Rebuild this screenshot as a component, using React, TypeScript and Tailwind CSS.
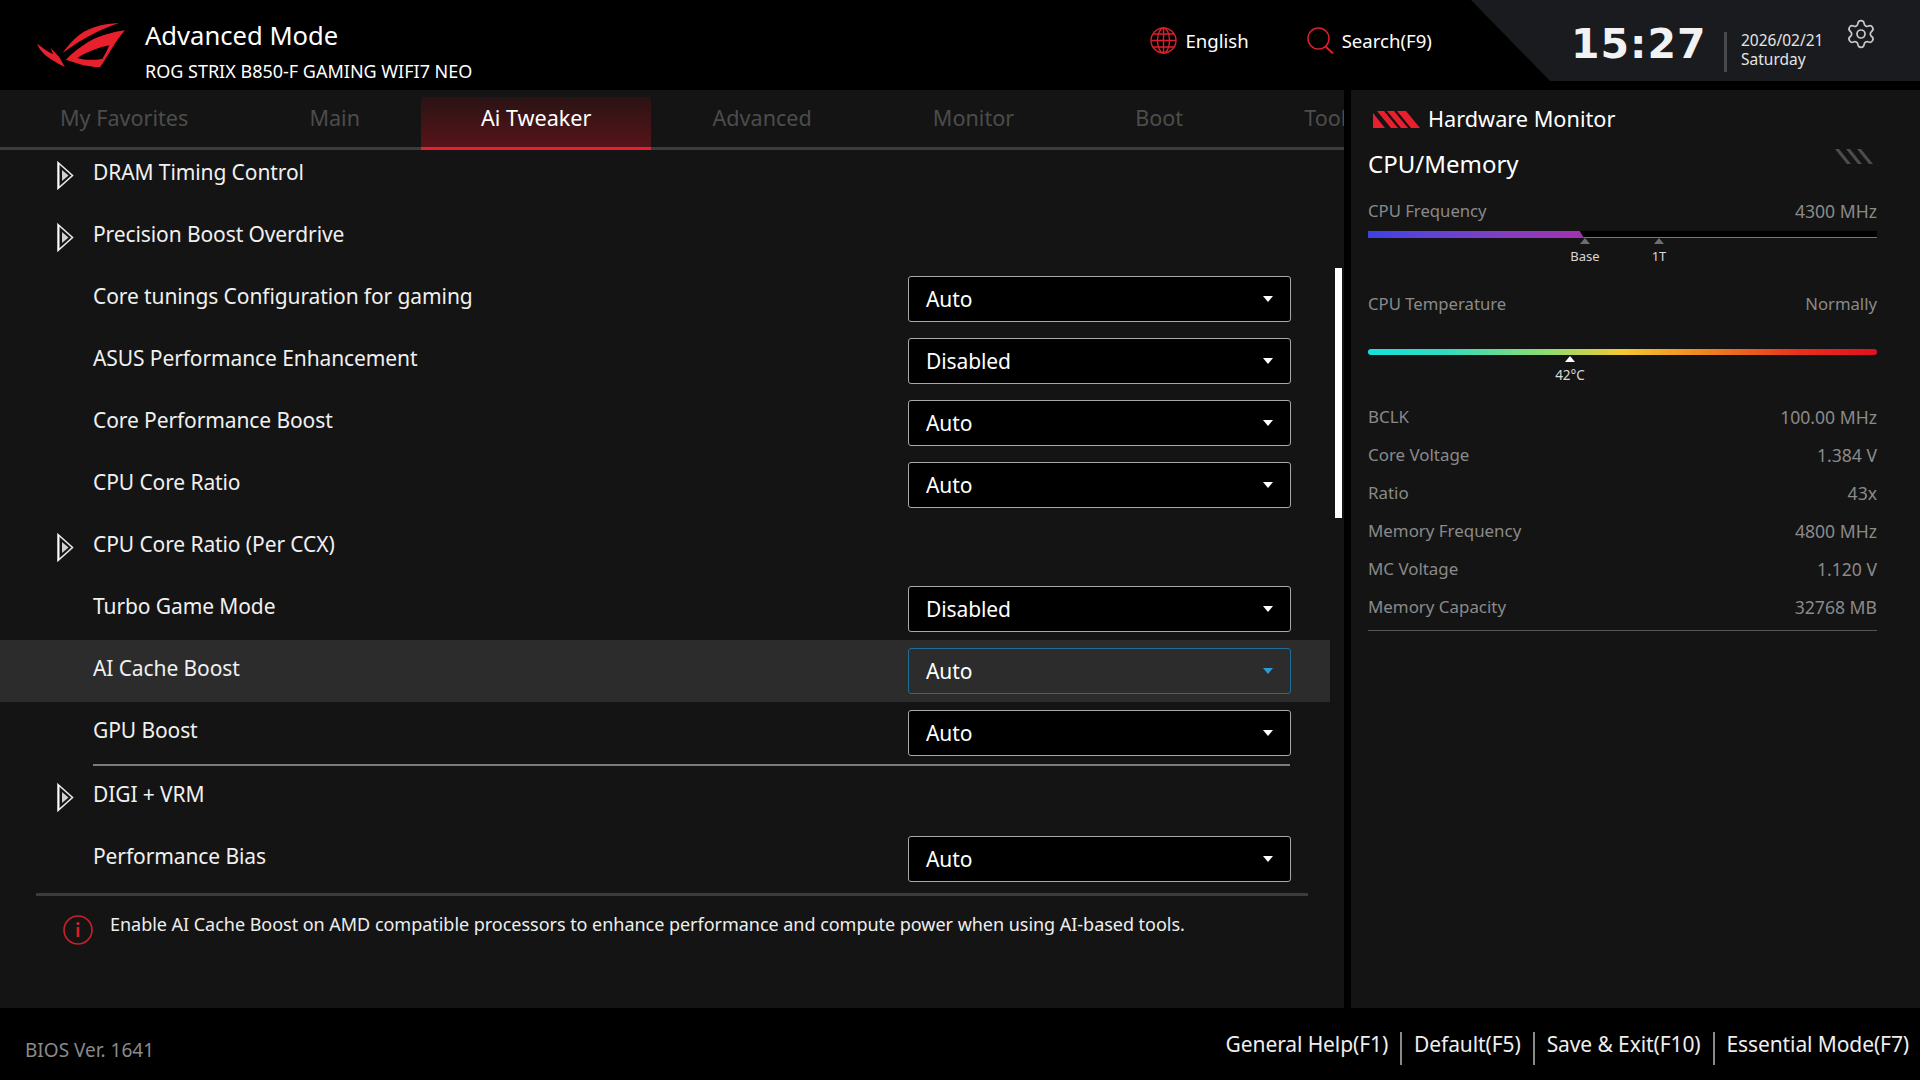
import { Settings } from 'lucide-react';

const font = { fontFamily: '"Noto Sans", sans-serif' };

const tabs = ['My Favorites', 'Main', 'Ai Tweaker', 'Advanced', 'Monitor', 'Boot', 'Tool'];

type Row = { label: string; value?: string; sub?: boolean; active?: boolean; divider?: boolean };

const rows: Row[] = [
  { label: 'DRAM Timing Control', sub: true },
  { label: 'Precision Boost Overdrive', sub: true },
  { label: 'Core tunings Configuration for gaming', value: 'Auto' },
  { label: 'ASUS Performance Enhancement', value: 'Disabled' },
  { label: 'Core Performance Boost', value: 'Auto' },
  { label: 'CPU Core Ratio', value: 'Auto' },
  { label: 'CPU Core Ratio (Per CCX)', sub: true },
  { label: 'Turbo Game Mode', value: 'Disabled' },
  { label: 'AI Cache Boost', value: 'Auto', active: true },
  { label: 'GPU Boost', value: 'Auto', divider: true },
  { label: 'DIGI + VRM', sub: true },
  { label: 'Performance Bias', value: 'Auto' },
];

const stats = [
  ['BCLK', '100.00 MHz'],
  ['Core Voltage', '1.384 V'],
  ['Ratio', '43x'],
  ['Memory Frequency', '4800 MHz'],
  ['MC Voltage', '1.120 V'],
  ['Memory Capacity', '32768 MB'],
];

function RogLogo() {
  return (
    <svg width="88" height="44" viewBox="52 38 263 132" fill="#e8202e" className="shrink-0">
      <path d="M298 38C245 40 195 55 165 85C150 100 140 112 128 128C160 105 190 85 225 68C250 56 275 46 298 38Z" />
      <path
        fillRule="evenodd"
        d="M315 60C280 65 240 75 205 95C180 110 158 128 138 148L190 165L240 172C262 140 285 95 315 60ZM172 143C200 125 235 112 268 105C262 120 256 132 248 145C225 150 195 150 172 143Z"
      />
      <path d="M52 100C60 125 85 145 135 170L118 140L92 112L100 132C85 125 68 112 52 100Z" />
    </svg>
  );
}

function GlobeIcon() {
  return (
    <svg width="27" height="27" viewBox="0 0 27 27" fill="none" stroke="#d9202c" strokeWidth="1.4">
      <circle cx="13.5" cy="13.5" r="12.5" />
      <ellipse cx="13.5" cy="13.5" rx="6" ry="12.5" />
      <path d="M13.5 1V26M1 13.5H26M3 7H24M3 20H24" />
    </svg>
  );
}

function SearchIcon() {
  return (
    <svg width="27" height="27" viewBox="0 0 27 27" fill="none" stroke="#d9202c" strokeWidth="1.5">
      <circle cx="11.5" cy="11.5" r="10.5" />
      <path d="M18.5 19.5L26 26.5" strokeWidth="2" />
    </svg>
  );
}

function RedStripes() {
  return (
    <svg width="48" height="17" viewBox="0 0 48 17" fill="#e8202e">
      <polygon points="0,2 0,17 12,17" />
      <polygon points="4,0 11,0 25,17 18,17" />
      <polygon points="14,0 21,0 35,17 28,17" />
      <polygon points="24,0 33,0 47,17 38,17" />
    </svg>
  );
}

function GrayStripes() {
  return (
    <svg width="40" height="15" viewBox="0 0 40 15" fill="#4c4c4c">
      <polygon points="0,0 4,0 16,15 12,15" />
      <polygon points="11,0 15,0 27,15 23,15" />
      <polygon points="22,0 26,0 38,15 34,15" />
    </svg>
  );
}

function Chevron() {
  return (
    <svg width="17" height="29" viewBox="0 0 17 29">
      <polygon points="1,1.5 15.5,14.5 1,27.5" fill="none" stroke="#e6e6e6" strokeWidth="1.6" />
      <polygon points="1,1.5 2.5,3 2.5,26 1,27.5" fill="#ffffff" />
      <polygon points="5,9 11.5,14.5 5,20" fill="#d0d0d0" />
    </svg>
  );
}

function InfoIcon() {
  return (
    <svg width="30" height="30" viewBox="0 0 30 30" fill="none" className="shrink-0">
      <circle cx="15" cy="15" r="14" stroke="#c8202c" strokeWidth="1.6" />
      <circle cx="15" cy="8.5" r="1.6" fill="#d9202c" />
      <rect x="13.7" y="12" width="2.6" height="10" fill="#d9202c" />
    </svg>
  );
}

function Dropdown({ value, active }: { value: string; active?: boolean }) {
  return (
    <div
      className={`flex items-center justify-between w-[383px] h-[46px] rounded-[3px] border px-[17px] text-white text-[21px] tracking-[-0.1px] ${
        active ? 'border-[#1f6c96]' : 'bg-black border-[#a8a8a8]'
      }`}
    >
      <span className="pt-[2px]">{value}</span>
      <span
        className={`w-0 h-0 border-x-[5px] border-x-transparent border-t-[6px] mb-[1px] ${
          active ? 'border-t-[#2b9bd8]' : 'border-t-white'
        }`}
      />
    </div>
  );
}

function Triangle({ color }: { color: string }) {
  return <span className="block w-0 h-0 border-x-[5px] border-x-transparent border-b-[6px]" style={{ borderBottomColor: color }} />;
}

export default function App() {
  return (
    <div className="w-[1920px] h-[1080px] bg-black flex flex-col overflow-hidden text-white" style={font}>
      {/* top bar */}
      <div className="h-[90px] flex shrink-0">
        <div className="flex items-start pl-[37px] pt-[23px]">
          <RogLogo />
          <div className="ml-[20px] -mt-[23px]">
            <div className="text-[25.6px] leading-[36px] mt-[18px]">Advanced Mode</div>
            <div className="text-[18px] leading-[26px] mt-[4px] whitespace-nowrap">ROG STRIX B850-F GAMING WIFI7 NEO</div>
          </div>
        </div>
        <div className="flex items-start pt-[27px] ml-[678px]">
          <GlobeIcon />
          <span className="ml-[8px] text-[18.6px] leading-[27px]">English</span>
          <div className="ml-[58px]">
            <SearchIcon />
          </div>
          <span className="ml-[8px] text-[18.6px] leading-[27px]">Search(F9)</span>
        </div>
        <div className="ml-auto w-[449px] h-[81px] bg-[#1a1b1f] [clip-path:polygon(0_0,100%_0,100%_100%,79px_100%)] flex items-start pl-[100px]">
          <div
            className="mt-[19px] w-[133px] text-[41px] leading-[50px] font-bold tracking-[1px] whitespace-nowrap text-[#f2f2f2]"
            style={{ fontFamily: '"DejaVu Sans", sans-serif' }}
          >
            15:27
          </div>
          <div className="ml-[20px] mt-[32px] w-[3px] h-[40px] bg-[#48494c]" />
          <div className="ml-[14px] mt-[31px] text-[15.5px] leading-[19px] text-[#e4e4e4]">
            <div>2026/02/21</div>
            <div>Saturday</div>
          </div>
          <Settings className="ml-[22px] mt-[18px] text-[#c8c8c8]" size={32} strokeWidth={1.3} />
        </div>
      </div>

      {/* main */}
      <div className="flex-1 flex min-h-0">
        <div className="relative w-[1344px] bg-[#141414] flex flex-col overflow-hidden">
          <div className="flex gap-[1px] h-[60px] shrink-0 items-end border-b-[3px] border-[#3c3c3c] whitespace-nowrap text-[#4c4c4c] text-[21.6px]">
            {tabs.map((t) => (
              <div
                key={t}
                className={`px-[60px] h-[53px] -mb-[3px] leading-[42px] shrink-0 ${
                  t === 'Ai Tweaker'
                    ? 'text-white border-b-[3px] border-[#e8202e] bg-gradient-to-b from-[#2a1214] to-[#571319]'
                    : ''
                }`}
              >
                {t}
              </div>
            ))}
          </div>

          <div className="h-[743px] overflow-hidden shrink-0">
            <div className="-mt-[6px]">
              {rows.map((r) => (
                <div key={r.label}>
                  <div className={`flex items-center h-[62px] w-[1330px] pr-[39px] ${r.active ? 'bg-[#2c2c2c]' : ''}`}>
                    <div className="w-[93px] pl-[57px] flex items-center shrink-0">{r.sub && <Chevron />}</div>
                    <div className="flex-1 text-[21px] tracking-[-0.1px] pb-[4px] text-[#f0f0f0]">{r.label}</div>
                    {r.value && <Dropdown value={r.value} active={r.active} />}
                  </div>
                  {r.divider && <div className="ml-[93px] w-[1197px] h-[2px] bg-[#7c7c7c]" />}
                </div>
              ))}
            </div>
          </div>

          <div className="ml-[36px] w-[1272px] border-t-[3px] border-[#3c3c3c] pl-[27px] flex items-start">
            <div className="mt-[19px]">
              <InfoIcon />
            </div>
            <div className="ml-[17px] mt-[14px] text-[18px] tracking-[-0.03px] leading-[28px] text-[#eeeeee] whitespace-nowrap">
              Enable AI Cache Boost on AMD compatible processors to enhance performance and compute power when using AI-based tools.
            </div>
          </div>

          <div className="absolute left-[1335px] top-[178px] w-[7px] h-[250px] bg-white" />
        </div>

        <div className="w-[569px] ml-[7px] bg-[#141414] pl-[17px] pr-[43px]">
          <div className="flex items-center h-[28px] mt-[15px] pl-[5px]">
            <RedStripes />
            <span className="ml-[7px] text-[21.7px]">Hardware Monitor</span>
          </div>
          <div className="flex justify-between items-start h-[34px] mt-[14px]">
            <span className="text-[24px] leading-[34px]">CPU/Memory</span>
            <div className="mt-[2px] mr-[2px]">
              <GrayStripes />
            </div>
          </div>

          <div className="flex justify-between text-[#8a8a8a] text-[16.7px] leading-[24px] mt-[18px]">
            <span>CPU Frequency</span>
            <span className="text-[17.6px]">4300 MHz</span>
          </div>
          <div className="relative mt-[8px] h-[7px] bg-black border-b border-[#777777]">
            <div className="absolute left-0 top-0 h-[7px] w-[216px] bg-gradient-to-r from-[#3d41e4] to-[#a32fb0] [clip-path:polygon(0_0,98%_0,100%_100%,0_100%)]" />
            <div className="absolute left-[212px] top-[7px] flex flex-col items-center w-[10px]">
              <Triangle color="#6e6e6e" />
              <span className="text-[13px] leading-[18px] mt-[3px] text-[#d8d8d8]">Base</span>
            </div>
            <div className="absolute left-[286px] top-[7px] flex flex-col items-center w-[10px]">
              <Triangle color="#6e6e6e" />
              <span className="text-[13px] leading-[18px] mt-[3px] text-[#d8d8d8]">1T</span>
            </div>
          </div>

          <div className="flex justify-between text-[#8a8a8a] text-[16.7px] leading-[24px] mt-[54px]">
            <span>CPU Temperature</span>
            <span>Normally</span>
          </div>
          <div className="relative mt-[33px] h-[6px] rounded-full bg-[linear-gradient(to_right,#16e0dc_0%,#2fdcc0_15%,#8fdc70_35%,#f5c832_50%,#ef8a20_65%,#e8301c_85%,#e01020_100%)]">
            <div className="absolute left-[197px] top-[7px] flex flex-col items-center w-[10px]">
              <Triangle color="#ffffff" />
              <span className="text-[13.5px] leading-[18px] mt-[4px] text-[#d8d8d8] whitespace-nowrap">42°C</span>
            </div>
          </div>

          <div className="mt-[43px]">
            {stats.map(([k, v]) => (
              <div key={k} className="flex justify-between items-center h-[38px] text-[#8a8a8a] text-[16.9px]">
                <span>{k}</span>
                <span className="text-[17.6px]">{v}</span>
              </div>
            ))}
          </div>
          <div className="mt-[4px] h-px bg-[#555555]" />
        </div>
      </div>

      {/* footer */}
      <div className="h-[72px] shrink-0 flex justify-between pl-[25px] pr-[11px]">
        <div className="text-[#8a8a8a] text-[19px] mt-[29px] leading-[26px]">BIOS Ver. 1641</div>
        <div className="flex items-start mt-[24px] text-[21px] tracking-[-0.1px] leading-[24px] text-[#eeeeee]">
          <span>General Help(F1)</span>
          <span className="mx-[12px] w-[2px] h-[33px] bg-[#8a8a8a]" />
          <span>Default(F5)</span>
          <span className="mx-[12px] w-[2px] h-[33px] bg-[#8a8a8a]" />
          <span>{'Save & Exit(F10)'}</span>
          <span className="mx-[12px] w-[2px] h-[33px] bg-[#8a8a8a]" />
          <span>Essential Mode(F7)</span>
        </div>
      </div>
    </div>
  );
}
